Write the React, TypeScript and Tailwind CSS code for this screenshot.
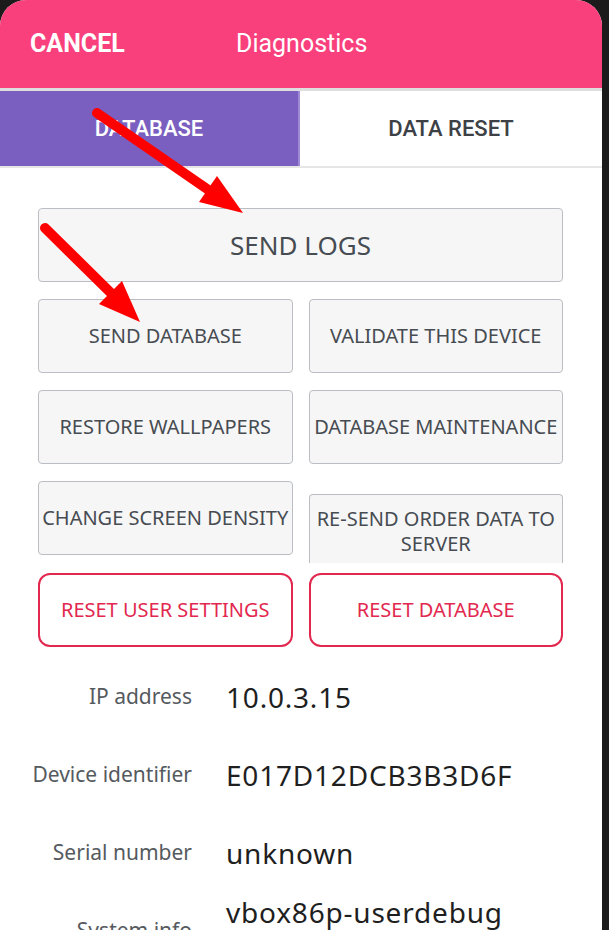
import React from "react";

const btn =
  "flex items-center justify-center bg-[#f6f6f6] border-[1.5px] border-[#babec2] rounded-[4px] text-[#474c52] text-[20px] whitespace-nowrap";
const reset =
  "flex items-center justify-center bg-white border-2 border-[#e2284f] rounded-[12px] text-[#e2284f] text-[20px] whitespace-nowrap h-[74px]";

function InfoRow({ label, value }: { label: string; value: React.ReactNode }) {
  return (
    <div className="flex items-center h-[78px]">
      <div className="w-[192px] shrink-0 text-right text-[21px] text-[#555a5e]">{label}</div>
      <div className="pl-[34px] text-[28px] tracking-[0.8px] text-[#1f1f1f]">{value}</div>
    </div>
  );
}

export default function App() {
  return (
    <div
      className="w-[609px] h-[930px] overflow-hidden bg-[#1b1b1b] flex"
      style={{ fontFamily: "'Noto Sans', sans-serif" }}
    >
      <div className="w-[602px] h-[930px] bg-white rounded-t-[26px] overflow-hidden flex flex-col relative">
        {/* Header */}
        <div
          className="h-[88px] shrink-0 bg-[#f9407d] flex items-center text-white text-[25px]"
          style={{ fontFamily: "Roboto, sans-serif" }}
        >
          <div className="w-[236px] pl-[30px] font-bold">CANCEL</div>
          <div>Diagnostics</div>
        </div>
        <div className="h-[3px] shrink-0 bg-[#dedede]" />
        {/* Tabs */}
        <div
          className="h-[77px] shrink-0 flex border-b-2 border-[#e6e6e6] text-[22px] font-medium"
          style={{ fontFamily: "Roboto, sans-serif" }}
        >
          <div className="w-[300px] bg-[#7a5fc0] border-r-2 border-[#9f8ad6] flex items-center justify-center text-white">
            DATABASE
          </div>
          <div className="flex-1 flex items-center justify-center text-[#3d4146]">DATA RESET</div>
        </div>

        {/* Buttons */}
        <div className="px-[38px] pt-[40px] pr-[39px] flex flex-col">
          <div className={btn + " h-[74px] text-[26px]"}>SEND LOGS</div>
          <div className="grid grid-cols-2 gap-x-[16px] gap-y-[17px] mt-[17px]">
            <div className={btn + " h-[74px]"}>SEND DATABASE</div>
            <div className={btn + " h-[74px]"}>VALIDATE THIS DEVICE</div>
            <div className={btn + " h-[74px]"}>RESTORE WALLPAPERS</div>
            <div className={btn + " h-[74px]"}>DATABASE MAINTENANCE</div>
          </div>
          <div className="grid grid-cols-2 gap-x-[16px] mt-[17px] h-[82px]">
            <div className={btn + " h-[74px] text-[19.5px]"}>CHANGE SCREEN DENSITY</div>
            <div className="mt-[13px] h-[69px] overflow-hidden bg-[#f6f6f6] border-[1.5px] border-b-0 border-[#babec2] rounded-t-[4px] text-[#474c52] text-[20px] text-center leading-[25px] pt-[11px]">
              RE-SEND ORDER DATA TO
              <br />
              SERVER
            </div>
          </div>
          <div className="grid grid-cols-2 gap-x-[16px] mt-[10px]">
            <div className={reset}>RESET USER SETTINGS</div>
            <div className={reset}>RESET DATABASE</div>
          </div>
        </div>

        {/* Info */}
        <div className="mt-[11px] flex flex-col">
          <InfoRow label="IP address" value="10.0.3.15" />
          <InfoRow label="Device identifier" value="E017D12DCB3B3D6F" />
          <InfoRow label="Serial number" value="unknown" />
          <div className="flex items-center pt-[1px]">
            <div className="w-[192px] shrink-0 text-right text-[21px] text-[#555a5e]">System info</div>
            <div className="pl-[34px] text-[28px] tracking-[0.8px] text-[#1f1f1f] leading-[38px]">
              vbox86p-userdebug
              <br />9 PSR1.180720.075
            </div>
          </div>
        </div>

        {/* Annotation arrows */}
        <svg
          className="absolute inset-0 pointer-events-none"
          width="602"
          height="930"
          viewBox="0 0 602 930"
        >
          <line x1="97" y1="113" x2="210" y2="191" stroke="#ff0000" strokeWidth="10" strokeLinecap="round" />
          <polygon points="243,213 199,202 217,176" fill="#ff0000" />
          <line x1="45" y1="228" x2="113" y2="295" stroke="#ff0000" strokeWidth="10" strokeLinecap="round" />
          <polygon points="140,322 99,304 122,281" fill="#ff0000" />
        </svg>
      </div>
    </div>
  );
}
